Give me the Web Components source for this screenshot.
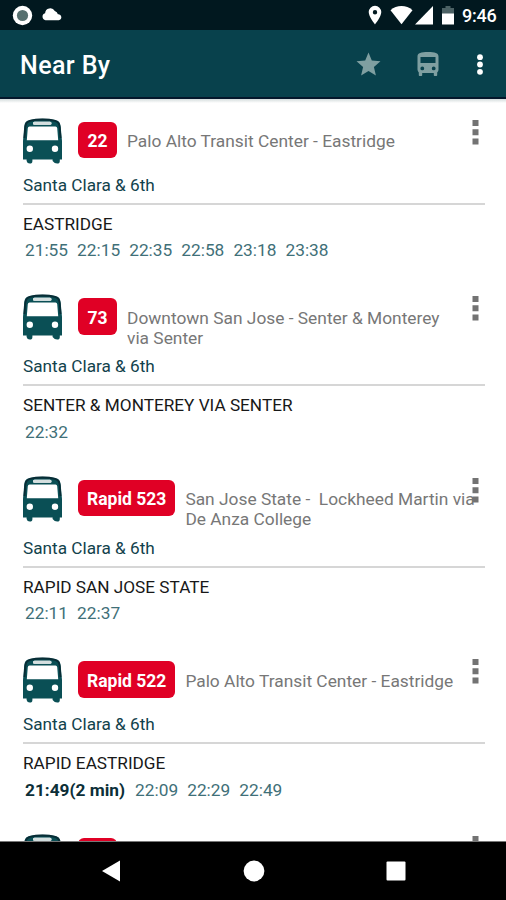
<!DOCTYPE html>
<html lang="en">
<head>
<meta charset="utf-8">
<title>Near By</title>
<style>
    body {
        margin: 0;
        background: #fff;
        font-family: Roboto, "Liberation Sans", sans-serif;
    }
</style>
</head>
<body>

<nearby-app>
    <status-bar slot="status">9:46</status-bar>
    <app-header slot="header">Near By</app-header>

    <route-card>
        <route-badge slot="badge">22</route-badge>
        <span slot="name">Palo Alto Transit Center - Eastridge</span>
        <span slot="stop">Santa Clara &amp; 6th</span>
        <span slot="direction">EASTRIDGE</span>
        <departure-times slot="times" times="21:55,22:15,22:35,22:58,23:18,23:38"></departure-times>
    </route-card>

    <route-card lines="2">
        <route-badge slot="badge">73</route-badge>
        <span slot="name">Downtown San Jose - Senter &amp; Monterey<br>via Senter</span>
        <span slot="stop">Santa Clara &amp; 6th</span>
        <span slot="direction">SENTER &amp; MONTEREY VIA SENTER</span>
        <departure-times slot="times" times="22:32"></departure-times>
    </route-card>

    <route-card lines="2">
        <route-badge slot="badge">Rapid 523</route-badge>
        <span slot="name">San Jose State -&nbsp; Lockheed Martin via<br>De Anza College</span>
        <span slot="stop">Santa Clara &amp; 6th</span>
        <span slot="direction">RAPID SAN JOSE STATE</span>
        <departure-times slot="times" times="22:11,22:37"></departure-times>
    </route-card>

    <route-card>
        <route-badge slot="badge">Rapid 522</route-badge>
        <span slot="name">Palo Alto Transit Center - Eastridge</span>
        <span slot="stop">Santa Clara &amp; 6th</span>
        <span slot="direction">RAPID EASTRIDGE</span>
        <departure-times slot="times" next="21:49(2 min)" times="22:09,22:29,22:49"></departure-times>
    </route-card>

    <route-card>
        <route-badge slot="badge"></route-badge>
    </route-card>

    <nav-bar slot="nav"></nav-bar>
</nearby-app>

<script>
class NearbyApp extends HTMLElement {

    constructor() {
        super()
        this.shadow = this.attachShadow({ mode: 'open' })
    }

    connectedCallback() {
        this.render()
    }

    render() {
        this.shadow.innerHTML =
      /*html*/`
      <style>
        :host{
            display:flex;
            flex-direction:column;
            width:506px;
            height:900px;
            overflow:hidden;
        }

        .list{
            flex:1;
            min-height:0;
            overflow:hidden;
            background:linear-gradient(#d5dddd, #fff 4px);
        }
      </style>

      <slot name="status"></slot>
      <slot name="header"></slot>
      <div class="list"><slot></slot></div>
      <slot name="nav"></slot>
      `
    }
}

class StatusBar extends HTMLElement {

    constructor() {
        super()
        this.shadow = this.attachShadow({ mode: 'open' })
    }

    connectedCallback() {
        this.render()
    }

    render() {
        this.shadow.innerHTML =
      /*html*/`
      <style>
        :host{
            display:flex;
            flex:none;
            align-items:center;
            box-sizing:border-box;
            height:30px;
            padding:0 9px 0 12px;
            background:#01181f;
            color:#fff;
            font-size:18px;
            font-weight:500;
        }

        svg{
            display:block;
            flex:none;
            fill:#fff;
        }

        .cloud{ margin-left:9px; }
        .pin{ margin-left:auto; }
        .wifi{ margin-left:8px; }
        .signal{ margin-left:2px; }
        .battery{ margin-left:9px; }

        .time{
            width:35px;
            margin-left:8px;
            line-height:30px;
            padding-top:2px;
            white-space:nowrap;
            letter-spacing:-0.2px;
        }
      </style>

      <svg width="21" height="21" viewBox="0 0 21 21">
        <circle cx="10.5" cy="10.5" r="9.7"/>
        <circle cx="10.5" cy="10.5" r="5.6" fill="#56706f"/>
      </svg>
      <svg class="cloud" width="20" height="20" viewBox="0 0 20 20">
        <path d="M3.500 15.200a3.600 3.600 0 0 1-.4-7A5.200 5.200 0 0 1 12.800 6a4.500 4.500 0 0 1 3.100 3.200 3 3 0 0 1 .8 6z"/>
      </svg>
      <svg class="pin" width="14" height="20" viewBox="0 0 14 20">
        <path fill-rule="evenodd" d="M7 .8a6.3 6.3 0 0 0-6.3 6.3C.7 11.700 7 19.500 7 19.500s6.300-7.800 6.300-12.400A6.300 6.300 0 0 0 7 .8zm0 4.200a2.200 2.200 0 1 1 0 4.400 2.200 2.200 0 0 1 0-4.400z"/>
      </svg>
      <svg class="wifi" width="23" height="20" viewBox="0 0 23 20">
        <path d="M11.500 19.200.5 5.200Q5.300 1 11.500 1t11 4.200z"/>
      </svg>
      <svg class="signal" width="18" height="20" viewBox="0 0 18 20">
        <path d="M18 1v18.500H0z"/>
      </svg>
      <svg class="battery" width="12" height="20" viewBox="0 0 12 20">
        <path fill="#4b6164" d="M3.500 1h5v2H12v6H0V3h3.500z"/>
        <path d="M0 8.500h12v11H0z"/>
      </svg>
      <div class="time"><slot></slot></div>
      `
    }
}

class AppHeader extends HTMLElement {

    constructor() {
        super()
        this.shadow = this.attachShadow({ mode: 'open' })
    }

    connectedCallback() {
        this.render()
    }

    render() {
        this.shadow.innerHTML =
      /*html*/`
      <style>
        :host{
            display:flex;
            flex:none;
            align-items:center;
            box-sizing:border-box;
            height:69px;
            padding:1px 21px 0 20px;
            background:#08414c;
            border-bottom:2px solid #04172b;
            color:#fff;
        }

        .title{
            flex:1;
            font-size:25px;
            font-weight:500;
            letter-spacing:0.4px;
            line-height:30px;
            padding-top:4px;
            white-space:nowrap;
        }

        svg{
            display:block;
            flex:none;
        }

        .bus{ margin-left:36px; }
        .more{ margin-left:36px; }
      </style>

      <div class="title"><slot></slot></div>
      <svg width="25" height="24" viewBox="0 0 25 24" fill="#7f9fa1">
        <path d="m12.500 19 7.400 4.500-2-8.500 6.600-5.700-8.700-.7L12.500.5 9.200 8.600l-8.700.7L7.100 15l-2 8.500z"/>
      </svg>
      <svg class="bus" width="22" height="24" viewBox="0 0 22 24" fill="#7f9fa1">
        <path fill-rule="evenodd" d="M.5 4.500C.5 1 4 0 11 0s10.500 1 10.500 4.500v13c0 1.200-.5 2.200-1.300 2.900V23c0 .6-.4 1-1 1h-1.400c-.6 0-1-.4-1-1v-2H5.200v2c0 .6-.4 1-1 1H2.800c-.6 0-1-.4-1-1v-2.600A4 4 0 0 1 .5 17.500zM3.500 5v6h15V5zM5.300 14.500a1.900 1.900 0 1 0 0 3.800 1.900 1.900 0 0 0 0-3.800zm11.400 0a1.900 1.900 0 1 0 0 3.800 1.900 1.900 0 0 0 0-3.800z"/>
      </svg>
      <svg class="more" width="10" height="24" viewBox="0 0 10 24" fill="#fff">
        <circle cx="5" cy="5.200" r="2.900"/>
        <circle cx="5" cy="12.500" r="2.900"/>
        <circle cx="5" cy="19.800" r="2.900"/>
      </svg>
      `
    }
}

class RouteBadge extends HTMLElement {

    constructor() {
        super()
        this.shadow = this.attachShadow({ mode: 'open' })
    }

    connectedCallback() {
        this.render()
    }

    render() {
        this.shadow.innerHTML =
      /*html*/`
      <style>
        :host{
            display:block;
            box-sizing:border-box;
            min-width:39px;
            height:36.500px;
            padding:1.500px 9px 0;
            border-radius:6px;
            background:#e00025;
            color:#fff;
            font-size:17.500px;
            font-weight:700;
            line-height:37px;
            text-align:center;
            white-space:nowrap;
        }
      </style>

      <slot></slot>
      `
    }
}

class DepartureTimes extends HTMLElement {

    constructor() {
        super()
        this.shadow = this.attachShadow({ mode: 'open' })
    }

    connectedCallback() {
        this.render()
    }

    render() {
        let next = this.getAttribute('next');
        let times = (this.getAttribute('times') || '').split(',');

        this.shadow.innerHTML =
      /*html*/`
      <style>
        :host{
            display:flex;
            padding-left:2px;
            color:#3f7078;
            font-size:17.300px;
            line-height:20px;
            white-space:nowrap;
        }

        span{
            min-width:52.100px;
        }

        .next{
            margin-right:10px;
            color:#0c2f38;
            font-weight:700;
        }
      </style>

      ${next ? `<span class="next">${next}</span>` : ''}
      ${times.map(time => `<span>${time}</span>`).join('')}
      `
    }
}

class RouteCard extends HTMLElement {

    constructor() {
        super()
        this.shadow = this.attachShadow({ mode: 'open' })
    }

    connectedCallback() {
        this.render()
    }

    render() {
        this.shadow.innerHTML =
      /*html*/`
      <style>
        :host{
            display:block;
            position:relative;
            box-sizing:border-box;
            height:176.500px;
            padding:18.700px 21px 0 23px;
            font-size:17.200px;
            line-height:20px;
            white-space:nowrap;
        }

        :host([lines="2"]){
            height:181.500px;
        }

        .top{
            display:flex;
            align-items:flex-start;
            height:57.300px;
        }

        :host([lines="2"]) .top{
            height:62.300px;
        }

        .bus{
            display:block;
            flex:none;
            width:39px;
            height:46px;
            margin-top:-0.200px;
        }

        slot[name="badge"]{
            display:block;
            margin:4.200px 10px 0 16px;
        }

        .name{
            padding-top:13.700px;
            color:#777;
            font-size:17.350px;
        }

        .stop{
            height:28px;
            color:#12424c;
        }

        .line{
            height:2px;
            background:#d6d6d6;
        }

        .direction{
            margin-top:8.700px;
            height:20px;
            color:#181818;
        }

        .times{
            margin-top:6.500px;
        }

        /* the menu sits over the end of long route names */
        .menu{
            position:absolute;
            top:19.500px;
            right:27px;
        }
      </style>

      <div class="top">
        <svg class="bus" viewBox="0 0 39 46">
          <path fill="#0a4f55" fill-rule="evenodd" d="M0 28V23L1.200 9C1.600 4 3.500 3 6.500 2Q12 .7 19.500 .7T32.500 2C35.500 3 37.300 4 37.700 9L39 23v18.500h-2.200V43q0 2.600-2.600 2.600T29.600 43v-1.500H9.400V43q0 2.600-2.600 2.600T3.600 43v-1.500H0zM6.500 8.400Q5 8.400 4.800 10L3.800 22.300h31.400L34.200 10Q34 8.400 32.500 8.400zM11.500 3.800q-1.500 0-1.500 1.500t1.500 1.500h15.500q1.500 0 1.500-1.500t-1.500-1.500zM6.800 27.500a3.200 3.200 0 1 0 0 6.400 3.200 3.200 0 0 0 0-6.400zm25.200 0a3.200 3.200 0 1 0 0 6.400 3.200 3.200 0 0 0 0-6.400z"/>
          <path fill="none" stroke="#082c35" stroke-width="1.800" d="M1.500 20 2.300 9C2.600 5 4 3.600 7 2.800Q12 1.500 19.500 1.500T32 2.800C35 3.600 36.400 5 36.700 9l.8 11"/>
          <path fill="#d5dfdf" d="M11.500 3.800h15.500q1.500 0 1.500 1.500t-1.500 1.500H11.500Q10 6.800 10 5.300t1.500-1.500z"/>
        </svg>
        <slot name="badge"></slot>
        <div class="name"><slot name="name"></slot></div>
      </div>
      <div class="stop"><slot name="stop"></slot></div>
      <div class="line"></div>
      <div class="direction"><slot name="direction"></slot></div>
      <div class="times"><slot name="times"></slot></div>
      <svg class="menu" width="7" height="26" viewBox="0 0 7 26" fill="#737373">
        <path d="M.5 1h6v6h-6zM.5 10.200h6v6h-6zM.5 19.500h6v6h-6z"/>
      </svg>
      `
    }
}

class NavBar extends HTMLElement {

    constructor() {
        super()
        this.shadow = this.attachShadow({ mode: 'open' })
    }

    connectedCallback() {
        this.render()
    }

    render() {
        this.shadow.innerHTML =
      /*html*/`
      <style>
        :host{
            display:flex;
            flex:none;
            justify-content:space-between;
            align-items:center;
            box-sizing:border-box;
            height:59px;
            padding:0 99px 0 100px;
            border-top:1px solid #777;
            background:#000;
        }

        svg{
            display:block;
            fill:#fff;
        }
      </style>

      <svg width="22" height="22" viewBox="0 0 22 22"><path d="M2 11 20 .5v21z"/></svg>
      <svg width="22" height="22" viewBox="0 0 22 22"><circle cx="11" cy="11" r="10.400"/></svg>
      <svg width="22" height="22" viewBox="0 0 22 22"><rect x="1.500" y="1.500" width="19" height="19" rx="1"/></svg>
      `
    }
}

customElements.define('nearby-app', NearbyApp);
customElements.define('status-bar', StatusBar);
customElements.define('app-header', AppHeader);
customElements.define('route-badge', RouteBadge);
customElements.define('departure-times', DepartureTimes);
customElements.define('route-card', RouteCard);
customElements.define('nav-bar', NavBar);
</script>
</body>
</html>
